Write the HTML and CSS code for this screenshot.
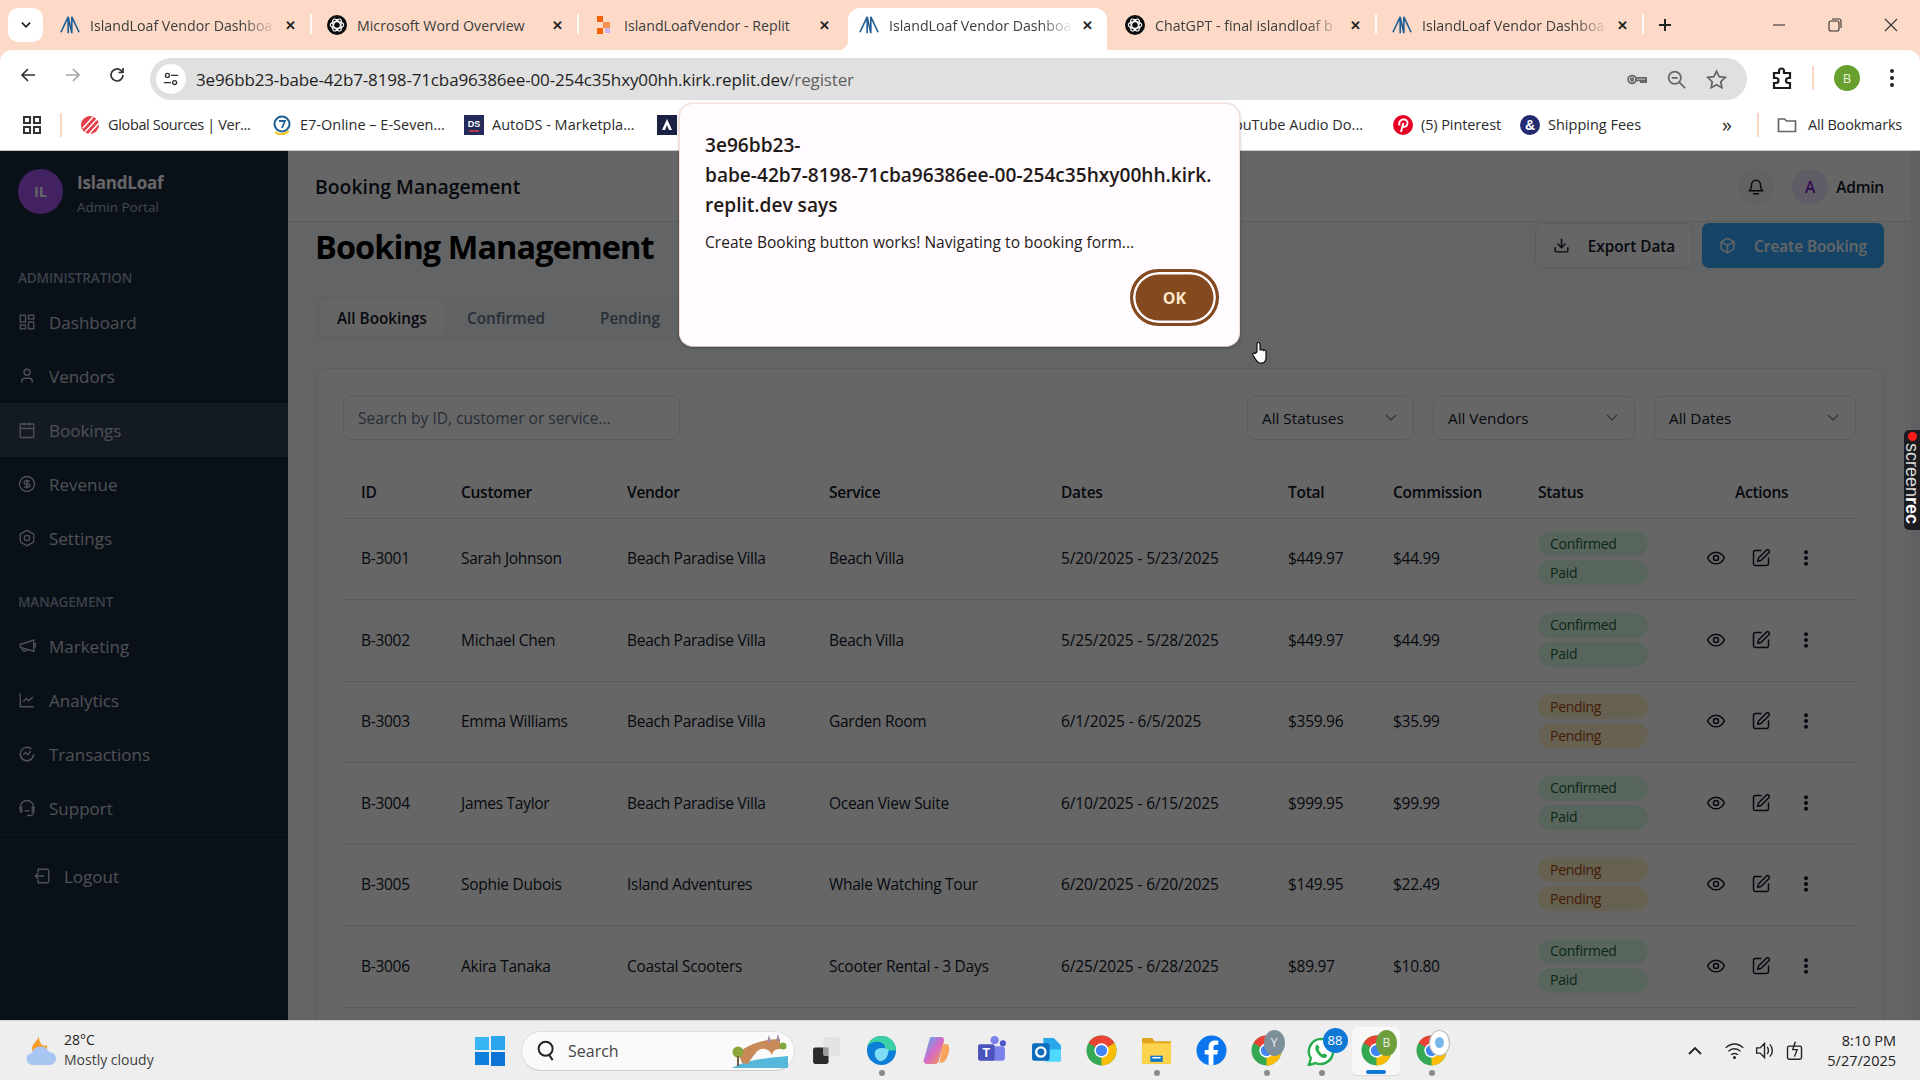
FILE: index.html
```html
<!DOCTYPE html>
<html lang="en">
<head>
<meta charset="utf-8">
<title>Booking Management</title>
<link rel="stylesheet" href="styles.css">
</head>
<body>
<svg class="defs" width="0" height="0" aria-hidden="true">
  <symbol id="i-il" viewBox="0 0 22 24"><path d="M1 20 9 3v18M13 21V3l8 17M9 3l4 18" fill="none" stroke="#1f5f94" stroke-width="1.8"/></symbol>
  <symbol id="i-gpt" viewBox="0 0 24 24"><circle cx="12" cy="12" r="12" fill="#0b0b0b"/><g fill="none" stroke="#fff" stroke-width="1.4"><ellipse cx="12" cy="12" rx="8" ry="4"/><ellipse cx="12" cy="12" rx="8" ry="4" transform="rotate(60 12 12)"/><ellipse cx="12" cy="12" rx="8" ry="4" transform="rotate(120 12 12)"/></g></symbol>
  <symbol id="i-replit" viewBox="0 0 20 20"><path d="M3 1h6v6H3zM3 13h6v6H3z" fill="#f26207"/><path d="M9 7h7v6H9z" fill="#f7924e"/><path d="M11 13h5v5h-5z" fill="#c9b6f2"/></symbol>
  <symbol id="i-chrome" viewBox="0 0 32 32"><circle cx="16" cy="16" r="15.5" fill="#34a853"/><path d="M16 .5a15.5 15.5 0 0 1 13.4 7.8L16 16 2.6 8.3A15.5 15.5 0 0 1 16 .5Z" fill="#ea4335"/><path d="M29.4 8.3A15.5 15.5 0 0 1 16 31.5L16 16Z" fill="#fbbc04"/><circle cx="16" cy="16" r="7.4" fill="#fff"/><circle cx="16" cy="16" r="5.8" fill="#4285f4"/></symbol>
  <symbol id="i-dashboard" viewBox="0 0 24 24"><rect x="3" y="3" width="7" height="9"/><rect x="14" y="3" width="7" height="5"/><rect x="14" y="12" width="7" height="9"/><rect x="3" y="16" width="7" height="5"/></symbol>
  <symbol id="i-user" viewBox="0 0 24 24"><path d="M19 21v-2a4 4 0 0 0-4-4H9a4 4 0 0 0-4 4v2"/><circle cx="12" cy="7" r="4"/></symbol>
  <symbol id="i-calendar" viewBox="0 0 24 24"><rect x="3" y="4" width="18" height="18" rx="1"/><path d="M16 2v4M8 2v4M3 10h18"/></symbol>
  <symbol id="i-dollar" viewBox="0 0 24 24"><circle cx="12" cy="12" r="10"/><path d="M16 8h-6a2 2 0 1 0 0 4h4a2 2 0 1 1 0 4H8M12 18V6"/></symbol>
  <symbol id="i-settings" viewBox="0 0 24 24"><path d="M21 16V8a2 2 0 0 0-1-1.73l-7-4a2 2 0 0 0-2 0l-7 4A2 2 0 0 0 3 8v8a2 2 0 0 0 1 1.73l7 4a2 2 0 0 0 2 0l7-4A2 2 0 0 0 21 16z"/><circle cx="12" cy="12" r="3.5"/></symbol>
  <symbol id="i-mega" viewBox="0 0 24 24"><path d="m3 10 18-6v15L3 14v-4z"/><path d="M11.6 16.8a3 3 0 1 1-5.8-1.6M21 9h2v4h-2" /></symbol>
  <symbol id="i-chart" viewBox="0 0 24 24"><path d="M3 3v18h18M7 14l4-4 3 3 6-5"/></symbol>
  <symbol id="i-trans" viewBox="0 0 24 24"><path d="M21 12a9 9 0 1 1-3-6.7"/><path d="M3 12a9 9 0 0 0 18 0"/><path d="M7 13l3-3 3 3 4-5"/></symbol>
  <symbol id="i-support" viewBox="0 0 24 24"><path d="M3 14v-3a9 9 0 1 1 18 0v3"/><path d="M3 11h2v6H3zM19 11h2v6h-2z"/><path d="M21 17a5 5 0 0 1-5 5h-4"/><path d="M9 15c1.500 1.300 4.500 1.300 6 0"/></symbol>
  <symbol id="i-logout" viewBox="0 0 24 24"><path d="M7 7V3h12a2 2 0 0 1 2 2v14a2 2 0 0 1-2 2H7v-4M15 12H3M7 8l-4 4 4 4"/></symbol>
  <symbol id="i-bell" viewBox="0 0 24 24"><path d="M6 9a6 6 0 0 1 12 0c0 6 3 8 3 8H3s3-2 3-8"/><path d="M9 21h6"/></symbol>
  <symbol id="i-download" viewBox="0 0 24 24"><path d="M21 15v4a2 2 0 0 1-2 2H5a2 2 0 0 1-2-2v-4M7 10l5 5 5-5M12 15V3"/></symbol>
  <symbol id="i-package" viewBox="0 0 24 24"><path d="M21 16V8a2 2 0 0 0-1-1.730l-7-4a2 2 0 0 0-2 0l-7 4A2 2 0 0 0 3 8v8a2 2 0 0 0 1 1.730l7 4a2 2 0 0 0 2 0l7-4A2 2 0 0 0 21 16z"/><path d="m3.300 7 8.700 5 8.700-5M12 22V12"/></symbol>
  <symbol id="i-eye" viewBox="0 0 24 24"><path d="M2 12s3-7 10-7 10 7 10 7-3 7-10 7-10-7-10-7Z"/><circle cx="12" cy="12" r="3"/></symbol>
  <symbol id="i-edit" viewBox="0 0 24 24"><path d="M12 3H5a2 2 0 0 0-2 2v14a2 2 0 0 0 2 2h14a2 2 0 0 0 2-2v-7"/><path d="M18.400 2.600a2.120 2.120 0 1 1 3 3L12 15l-4 1 1-4Z"/></symbol>
  <symbol id="i-dots" viewBox="0 0 24 24"><circle cx="12" cy="5" r="1.500" fill="currentColor"/><circle cx="12" cy="12" r="1.500" fill="currentColor"/><circle cx="12" cy="19" r="1.500" fill="currentColor"/></symbol>
  <symbol id="i-chev" viewBox="0 0 24 24"><path d="m5 8 7 7 7-7"/></symbol>
</svg>

<div class="chrome">
  <div class="tabstrip">
    <button class="tab-search"><svg class="ui-icon s14"><use href="#i-chev"/></svg></button>
    <div class="tab"><svg class="fav"><use href="#i-il"/></svg><span class="tab-title">IslandLoaf Vendor Dashboa</span><span class="tab-x">✕</span></div>
    <div class="tab"><svg class="fav"><use href="#i-gpt"/></svg><span class="tab-title tab-title-plain">Microsoft Word Overview</span><span class="tab-x">✕</span></div>
    <div class="tab tab-next-active"><svg class="fav"><use href="#i-replit"/></svg><span class="tab-title tab-title-plain">IslandLoafVendor - Replit</span><span class="tab-x">✕</span></div>
    <div class="tab tab-active"><svg class="fav"><use href="#i-il"/></svg><span class="tab-title">IslandLoaf Vendor Dashboa</span><span class="tab-x">✕</span></div>
    <div class="tab"><svg class="fav"><use href="#i-gpt"/></svg><span class="tab-title">ChatGPT - final islandloaf b</span><span class="tab-x">✕</span></div>
    <div class="tab"><svg class="fav"><use href="#i-il"/></svg><span class="tab-title">IslandLoaf Vendor Dashboa</span><span class="tab-x">✕</span></div>
    <svg class="new-tab" viewBox="0 0 16 16"><path d="M8 2v12M2 8h12"/></svg>
    <div class="win-controls">
      <svg viewBox="0 0 16 16"><path d="M2 8h12"/></svg>
      <svg viewBox="0 0 16 16"><rect x="2" y="4" width="10" height="10" rx="2"/><path d="M5 2h7a2 2 0 0 1 2 2v7"/></svg>
      <svg viewBox="0 0 16 16"><path d="m2 2 12 12M14 2 2 14"/></svg>
    </div>
  </div>
  <div class="toolbar">
    <svg class="nav-icon" viewBox="0 0 20 20"><path d="M17 10H4M10 4l-6 6 6 6"/></svg>
    <svg class="nav-icon nav-off" viewBox="0 0 20 20"><path d="M3 10h13M10 4l6 6-6 6"/></svg>
    <svg class="nav-icon" viewBox="0 0 20 20"><path d="M16 10a6 6 0 1 1-2-4.500L16 7.500M16 3v4.500h-4.500"/></svg>
    <div class="omnibox">
      <span class="site-info"><svg viewBox="0 0 20 20"><circle cx="6" cy="6" r="2.200"/><circle cx="14" cy="14" r="2.200"/><path d="M10 6h8M2 14h8"/></svg></span>
      <span class="url">3e96bb23-babe-42b7-8198-71cba96386ee-00-254c35hxy00hh.kirk.replit.dev<span class="url-path">/register</span></span>
      <svg class="omni-icon" viewBox="0 0 24 24"><circle cx="7" cy="12" r="4.500"/><circle cx="7" cy="12" r="1.500"/><path d="M11.500 10H23v5h-2v-2h-2v2h-2v-2h-5.500"/></svg>
      <svg class="omni-icon" viewBox="0 0 24 24"><circle cx="10" cy="10" r="7"/><path d="m15 15 7 7M6.500 10h7"/></svg>
      <svg class="omni-icon" viewBox="0 0 24 24"><path d="m12 2.500 3 6.300 6.900.9-5 4.800 1.200 6.900-6.100-3.300-6.100 3.300 1.200-6.900-5-4.800 6.900-.9Z"/></svg>
    </div>
    <svg class="ext-icon" viewBox="0 0 24 24"><path d="M4 7h5V5a2.500 2.500 0 0 1 5 0v2h6v5h-1.500a2.500 2.500 0 0 0 0 5H20v5H4v-5h2a2.500 2.500 0 0 0 0-5H4Z"/></svg>
    <span class="tool-sep"></span>
    <span class="profile">B</span>
    <svg class="kebab" viewBox="0 0 8 24"><circle cx="4" cy="5" r="2"/><circle cx="4" cy="12" r="2"/><circle cx="4" cy="19" r="2"/></svg>
  </div>
  <div class="bookmarks">
    <svg class="apps" viewBox="0 0 20 20"><rect x="2" y="2" width="6" height="6"/><rect x="12" y="2" width="6" height="6"/><rect x="2" y="12" width="6" height="6"/><rect x="12" y="12" width="6" height="6"/></svg>
    <span class="bm-sep"></span>
    <span class="bm bm-global"><svg class="bm-fav" viewBox="0 0 20 20"><circle cx="10" cy="10" r="9" fill="#e5404a"/><path d="M3 13 13 2M5 17 17 4M9 19 19 8" stroke="#fff" stroke-width="1.500"/></svg><span class="bm-tight">Global Sources | Ver...</span></span>
    <span class="bm bm-e7"><svg class="bm-fav" viewBox="0 0 20 20"><circle cx="10" cy="9" r="7.500" fill="none" stroke="#1f5f94" stroke-width="2"/><path d="M7 6h6l-3 7" fill="none" stroke="#1f5f94" stroke-width="1.800"/><path d="M3 17c4 3 9 3 14-1" fill="none" stroke="#f3c51c" stroke-width="2"/></svg>E7-Online – E-Seven...</span>
    <span class="bm bm-auto"><svg class="bm-fav" viewBox="0 0 20 20"><rect width="20" height="20" fill="#232a5c"/><path d="M5 12h10" stroke="#e5404a" stroke-width="1.500" transform="translate(0 4)"/><text x="10" y="12" font-size="9" font-weight="700" fill="#fff" text-anchor="middle" font-family="Liberation Sans">DS</text></svg>AutoDS - Marketpla...</span>
    <span class="bm bm-a"><svg class="bm-fav" viewBox="0 0 20 20"><rect width="20" height="20" fill="#1a2143"/><path d="M10 4 5 15h3l2-5 2 5h3Z" fill="#fff"/></svg></span>
    <span class="bm bm-yt">YouTube Audio Do...</span>
    <span class="bm bm-pin"><svg class="bm-fav" viewBox="0 0 20 20"><circle cx="10" cy="10" r="10" fill="#e60023"/><path d="M8 17 10.300 8M6.500 10.500C5 6 9 4 11.500 4.500c3 .6 3.600 3.400 2.600 5.500-1 2-3.700 2.500-4.700.8" fill="none" stroke="#fff" stroke-width="1.900"/></svg>(5) Pinterest</span>
    <span class="bm bm-ship"><svg class="bm-fav" viewBox="0 0 20 20"><circle cx="10" cy="10" r="10" fill="#232a70"/><text x="10" y="15" font-size="14" font-weight="700" fill="#fff" text-anchor="middle" font-family="Liberation Sans">&amp;</text></svg>Shipping Fees</span>
    <span class="bm-more">»</span>
    <span class="bm-sep bm-sep-r"></span>
    <span class="bm bm-all"><svg class="folder" viewBox="0 0 20 20"><path d="M1.500 4h6l2 2h9v10.500h-17Z"/></svg>All Bookmarks</span>
  </div>
</div>

<div class="page">
  <aside class="sidebar">
    <div class="brand">
      <span class="brand-logo">IL</span>
      <div class="brand-text"><strong>IslandLoaf</strong><span>Admin Portal</span></div>
    </div>
    <div class="nav-label">ADMINISTRATION</div>
    <a class="nav-item"><svg class="nav-svg"><use href="#i-dashboard"/></svg>Dashboard</a>
    <a class="nav-item"><svg class="nav-svg"><use href="#i-user"/></svg>Vendors</a>
    <a class="nav-item nav-active"><svg class="nav-svg"><use href="#i-calendar"/></svg>Bookings</a>
    <a class="nav-item"><svg class="nav-svg"><use href="#i-dollar"/></svg>Revenue</a>
    <a class="nav-item"><svg class="nav-svg"><use href="#i-settings"/></svg>Settings</a>
    <div class="nav-label nav-label-2">MANAGEMENT</div>
    <a class="nav-item"><svg class="nav-svg"><use href="#i-mega"/></svg>Marketing</a>
    <a class="nav-item"><svg class="nav-svg"><use href="#i-chart"/></svg>Analytics</a>
    <a class="nav-item"><svg class="nav-svg"><use href="#i-trans"/></svg>Transactions</a>
    <a class="nav-item"><svg class="nav-svg"><use href="#i-support"/></svg>Support</a>
    <div class="logout"><a class="nav-item"><svg class="nav-svg"><use href="#i-logout"/></svg>Logout</a></div>
  </aside>

  <main class="main">
    <header class="topbar">
      <div class="topbar-title">Booking Management</div>
      <span class="bell"><svg class="ln-icon"><use href="#i-bell"/></svg></span>
      <span class="avatar">A</span>
      <span class="admin">Admin</span>
    </header>
    <div class="content">
      <div class="title-row">
        <h1>Booking Management</h1>
        <button class="btn btn-outline"><svg class="ln-icon"><use href="#i-download"/></svg>Export Data</button>
        <button class="btn btn-primary"><svg class="ln-icon"><use href="#i-package"/></svg>Create Booking</button>
      </div>
      <div class="tablist">
        <span class="tabbtn tabbtn-on">All Bookings</span>
        <span class="tabbtn">Confirmed</span>
        <span class="tabbtn">Pending</span>
      </div>
      <section class="card">
        <div class="filters">
          <div class="search">Search by ID, customer or service...</div>
          <div class="select sel-s">All Statuses<svg class="ln-icon chev"><use href="#i-chev"/></svg></div>
          <div class="select sel-m">All Vendors<svg class="ln-icon chev"><use href="#i-chev"/></svg></div>
          <div class="select sel-m">All Dates<svg class="ln-icon chev"><use href="#i-chev"/></svg></div>
        </div>
        <table class="bookings">
          <colgroup>
            <col class="c-id"><col class="c-cust"><col class="c-vend"><col class="c-serv"><col class="c-date"><col class="c-total"><col class="c-comm"><col class="c-stat"><col class="c-act">
          </colgroup>
          <thead>
            <tr><th>ID</th><th>Customer</th><th>Vendor</th><th>Service</th><th>Dates</th><th>Total</th><th>Commission</th><th>Status</th><th class="th-act">Actions</th></tr>
          </thead>
          <tbody>
            <tr><td>B-3001</td><td>Sarah Johnson</td><td>Beach Paradise Villa</td><td>Beach Villa</td><td>5/20/2025 - 5/23/2025</td><td>$449.97</td><td>$44.99</td>
              <td><span class="badge ok">Confirmed</span><span class="badge ok">Paid</span></td>
              <td><div class="acts"><svg class="ln-icon"><use href="#i-eye"/></svg><svg class="ln-icon"><use href="#i-edit"/></svg><svg class="ln-icon"><use href="#i-dots"/></svg></div></td></tr>
            <tr><td>B-3002</td><td>Michael Chen</td><td>Beach Paradise Villa</td><td>Beach Villa</td><td>5/25/2025 - 5/28/2025</td><td>$449.97</td><td>$44.99</td>
              <td><span class="badge ok">Confirmed</span><span class="badge ok">Paid</span></td>
              <td><div class="acts"><svg class="ln-icon"><use href="#i-eye"/></svg><svg class="ln-icon"><use href="#i-edit"/></svg><svg class="ln-icon"><use href="#i-dots"/></svg></div></td></tr>
            <tr><td>B-3003</td><td>Emma Williams</td><td>Beach Paradise Villa</td><td>Garden Room</td><td>6/1/2025 - 6/5/2025</td><td>$359.96</td><td>$35.99</td>
              <td><span class="badge wait">Pending</span><span class="badge wait">Pending</span></td>
              <td><div class="acts"><svg class="ln-icon"><use href="#i-eye"/></svg><svg class="ln-icon"><use href="#i-edit"/></svg><svg class="ln-icon"><use href="#i-dots"/></svg></div></td></tr>
            <tr><td>B-3004</td><td>James Taylor</td><td>Beach Paradise Villa</td><td>Ocean View Suite</td><td>6/10/2025 - 6/15/2025</td><td>$999.95</td><td>$99.99</td>
              <td><span class="badge ok">Confirmed</span><span class="badge ok">Paid</span></td>
              <td><div class="acts"><svg class="ln-icon"><use href="#i-eye"/></svg><svg class="ln-icon"><use href="#i-edit"/></svg><svg class="ln-icon"><use href="#i-dots"/></svg></div></td></tr>
            <tr><td>B-3005</td><td>Sophie Dubois</td><td>Island Adventures</td><td>Whale Watching Tour</td><td>6/20/2025 - 6/20/2025</td><td>$149.95</td><td>$22.49</td>
              <td><span class="badge wait">Pending</span><span class="badge wait">Pending</span></td>
              <td><div class="acts"><svg class="ln-icon"><use href="#i-eye"/></svg><svg class="ln-icon"><use href="#i-edit"/></svg><svg class="ln-icon"><use href="#i-dots"/></svg></div></td></tr>
            <tr><td>B-3006</td><td>Akira Tanaka</td><td>Coastal Scooters</td><td>Scooter Rental - 3 Days</td><td>6/25/2025 - 6/28/2025</td><td>$89.97</td><td>$10.80</td>
              <td><span class="badge ok">Confirmed</span><span class="badge ok">Paid</span></td>
              <td><div class="acts"><svg class="ln-icon"><use href="#i-eye"/></svg><svg class="ln-icon"><use href="#i-edit"/></svg><svg class="ln-icon"><use href="#i-dots"/></svg></div></td></tr>
          </tbody>
        </table>
      </section>
    </div>
  </main>
  <div class="scrollbar"></div>
  <div class="dim"></div>
  <div class="screenrec"><i></i><span>screen<b>rec</b></span></div>
</div>

<footer class="taskbar">
  <div class="weather">
    <svg class="weather-icon" viewBox="0 0 32 30"><path d="M14 0c-1 5-7 7-7 13 0 3 3 5 7 5 5 0 9-3 8-9-3 2-8 0-8-9Z" fill="#f59f2a"/><path d="M8 29a6 6 0 0 1-1-12 9 9 0 0 1 17-1 6.500 6.500 0 0 1 1 13Z" fill="#a9c6f2"/></svg>
    <div class="weather-text"><span>28°C</span><span class="weather-sub">Mostly cloudy</span></div>
  </div>
  <svg class="win-logo" viewBox="0 0 30 30"><path d="M0 1h14v13H0z" fill="#38b6f4"/><path d="M16 0h14v14H16z" fill="#2aa5ee"/><path d="M0 16h14v13H0z" fill="#0e7fdc"/><path d="M16 16h14v14H16z" fill="#0d74d6"/></svg>
  <div class="tb-search">
    <svg class="tb-search-icon" viewBox="0 0 24 24"><circle cx="11" cy="10" r="8"/><path d="m15 17 4 6"/></svg>
    <span>Search</span>
    <svg class="bridge" viewBox="0 0 56 34"><path d="M0 34c14-8 34-10 56-12v12Z" fill="#56b7dc"/><path d="M6 19c10-9 26-14 42-14v10c-5 0-7 2-8 6-3-7-12-9-17-1-3 3-5 7-7 10l-6-1Z" fill="#c98a5a"/><circle cx="6" cy="18" r="5.500" fill="#8ca63c"/><path d="M5 22h2v10H5z" fill="#7a5a38"/><path d="M37 1l2 7h-4zM46 0l2 7h-4z" fill="#9c8aa8"/><circle cx="51" cy="12" r="3.500" fill="#7ea83c"/></svg>
  </div>
  <div class="apps-row">
    <span class="tb-app"><svg viewBox="0 0 30 30"><rect x="2" y="12" width="15" height="16" rx="2" fill="#2b2b2b"/><rect x="12" y="2" width="16" height="18" rx="2" fill="#e3e3e3"/><rect x="12" y="12" width="5" height="8" fill="#9a9a9a"/></svg></span>
    <span class="tb-app tb-dot"><svg viewBox="0 0 32 32"><circle cx="16" cy="16" r="15" fill="#0d7ed6"/><path d="M31 16c0-8-6-15-15-15C9 1 3 5 1 12c4-5 10-6 15-4 4 2 5 6 2 8" fill="#3ed0a5"/><path d="M9 19c0-6 9-7 14-4 1 5-3 12-8 12-3 0-6-4-6-8Z" fill="#7fdcf5"/></svg></span>
    <span class="tb-app"><svg viewBox="0 0 30 30"><defs><linearGradient id="cop" x1="0" y1="0" x2="1" y2="1"><stop offset="0" stop-color="#3bb8f0"/><stop offset=".5" stop-color="#d66ac9"/><stop offset="1" stop-color="#f8a03a"/></linearGradient></defs><path d="M10 2h9c3 0 4 2 3 5l-5 19c-1 2-2 2-4 2H6c-3 0-4-2-3-5L8 5c.4-2 1-3 2-3Z" fill="url(#cop)"/><path d="M21 9h5c3 5 0 12-2 15-1 2-3 3-6 3Z" fill="#f7a35c"/></svg></span>
    <span class="tb-app"><svg viewBox="0 0 30 30"><circle cx="18" cy="5" r="4" fill="#7b83eb"/><circle cx="26" cy="8" r="3" fill="#5059c9"/><rect x="13" y="11" width="15" height="14" rx="3" fill="#7b83eb"/><rect x="2" y="9" width="16" height="16" rx="2" fill="#4b53bc"/><text x="10" y="21" font-size="12" font-weight="700" fill="#fff" text-anchor="middle" font-family="Liberation Sans">T</text></svg></span>
    <span class="tb-app"><svg viewBox="0 0 30 30"><path d="M12 3h10l7 7v12H12Z" fill="#28a8ea"/><path d="M18 14h11v12H14Z" fill="#50d9ff"/><rect x="1" y="8" width="17" height="17" rx="2" fill="#0f6cbd"/><circle cx="9.500" cy="16.500" r="4.500" fill="none" stroke="#fff" stroke-width="2.200"/></svg></span>
    <span class="tb-app"><svg viewBox="0 0 32 32"><use href="#i-chrome"/></svg></span>
    <span class="tb-app tb-dot"><svg viewBox="0 0 30 30"><path d="M1 3h10l2 3h16v22H1Z" fill="#e3a41f"/><path d="M1 8h28v20H1Z" fill="#fcd34d"/><rect x="9" y="20" width="12" height="6" fill="#0f78c8"/><path d="M11 22h8" stroke="#fff" stroke-width="1.500"/></svg></span>
    <span class="tb-app"><svg viewBox="0 0 32 32"><circle cx="16" cy="16" r="15.500" fill="#0a75ee"/><path d="M18 31.500V20h4l.7-4.500H18v-3c0-1.500.7-2.500 2.700-2.500H23V6c-1-.2-2.300-.3-3.500-.3-4 0-6.500 2.400-6.500 6.500v3.300H9V20h4v11.500Z" fill="#fff"/></svg></span>
    <span class="tb-app tb-dot"><svg viewBox="0 0 32 32"><use href="#i-chrome"/></svg><span class="tb-prof tb-prof-y">Y</span></span>
    <span class="tb-app tb-dot"><svg viewBox="0 0 32 32"><path d="M16 4a13 13 0 0 0-11 20L3 31l7-2a13 13 0 1 0 6-25Z" fill="#fff" stroke="#27ae4c" stroke-width="2.500"/><path d="M11 10c-2 2-2 5 1 9s7 6 9 4l1-2-3-2-2 1c-2-1-3-3-4-5l1-2-2-3Z" fill="#27ae4c"/></svg><span class="tb-count">88</span></span>
    <span class="tb-app tb-on"><svg viewBox="0 0 32 32"><use href="#i-chrome"/></svg><span class="tb-prof tb-prof-b">B</span></span>
    <span class="tb-app tb-dot"><svg viewBox="0 0 32 32"><use href="#i-chrome"/></svg><span class="tb-prof tb-prof-w"></span></span>
  </div>
  <div class="tray">
    <svg class="tray-caret" viewBox="0 0 14 10"><path d="m1 8 6-6 6 6"/></svg>
    <svg class="tray-icon" viewBox="0 0 24 24"><path d="M2 9c6-6 14-6 20 0M5 13c4-4 10-4 14 0M8 17c2-2 6-2 8 0"/><circle cx="12" cy="20" r="1"/></svg>
    <svg class="tray-icon" viewBox="0 0 24 24"><path d="M3 9v6h4l5 5V4L7 9ZM15 8c2 2 2 6 0 8M18 5c4 4 4 10 0 14"/></svg>
    <svg class="tray-icon" viewBox="0 0 24 24"><rect x="4" y="7" width="16" height="15" rx="2"/><path d="m13 2-3 9h5l-3 8"/></svg>
    <div class="clock"><span>8:10 PM</span><span>5/27/2025</span></div>
  </div>
</footer>

<div class="alert" role="alertdialog">
  <div class="alert-title">3e96bb23-<br>babe-42b7-8198-71cba96386ee-00-254c35hxy00hh.kirk.<br>replit.dev says</div>
  <p class="alert-msg">Create Booking button works! Navigating to booking form...</p>
  <div class="alert-foot"><button class="alert-ok">OK</button></div>
</div>
<svg class="cursor" viewBox="0 0 18 24"><path d="M6 11V3a1.500 1.500 0 0 1 3 0v6l1 0a1.500 1.500 0 0 1 2.500.5 1.500 1.500 0 0 1 2.500.8V17c0 3-2 5-4 5H9c-2 0-3-2-4-3l-3-5c-.8-1.500 1-2.500 2-1.500Z" fill="#fff" stroke="#000" stroke-width="1.100"/></svg>
</body>
</html>
```
FILE: styles.css
```css
* { box-sizing: border-box; }
html, body { margin: 0; height: 100%; }
body {
  width: 1920px; height: 1080px; overflow: hidden; position: relative;
  display: flex; flex-direction: column;
  font-family: "Open Sans", "Noto Sans", sans-serif; color: #0f172a; background: #fff;
}
.defs { position: absolute; }
button { font: inherit; border: 0; }

/* browser chrome */
.chrome { flex: 0 0 151px; background: #fddac7; display: flex; flex-direction: column; }
.tabstrip { height: 50px; display: flex; align-items: flex-start; padding: 8px 0 0 8px; }
.tab-search { width: 35px; height: 34px; margin-right: 2px; background: #fff; border-radius: 10px; padding: 0; display: flex; align-items: center; justify-content: center; color: #222; }
.ui-icon { fill: none; stroke: currentColor; stroke-width: 3; }
.s14 { width: 14px; height: 14px; }
.tab { flex: 0 0 267px; min-width: 0; height: 42px; display: flex; align-items: center; padding: 0 14px 8px 15px; position: relative; font-size: 14.200px; color: #3c3c3c; }
.tab::after { content: ""; position: absolute; right: 0; top: 6px; height: 20px; width: 2px; background: #fff; opacity: .85; }
.tab-next-active::after, .tab-active::after { display: none; }
.tab-active { flex-basis: 259px; margin: 0 3px 0 2px; background: #fff; border-radius: 12px 12px 0 0; padding-left: 11px; padding-right: 12px; }
.tab-active::before { content: ""; position: absolute; left: -10px; bottom: 0; width: 10px; height: 10px; background: radial-gradient(circle at 0 0, transparent 10px, #fff 10.500px); }
.fav { width: 20px; height: 22px; flex: none; margin-right: 10px; }
.tab-title { flex: 1; min-width: 0; white-space: nowrap; overflow: hidden; -webkit-mask-image: linear-gradient(90deg, #000 82%, transparent 100%); mask-image: linear-gradient(90deg, #000 82%, transparent 100%); }
.tab-title-plain { -webkit-mask-image: none; mask-image: none; }
.tab-x { flex: none; width: 16px; text-align: center; font-size: 13px; font-weight: 700; margin-left: 6px; color: #222; }
.new-tab { width: 16px; height: 16px; margin: 9px 0 0 13px; fill: none; stroke: #222; stroke-width: 2; flex: none; }
.win-controls { margin-left: auto; display: flex; gap: 40px; padding: 9px 21px 0 0; }
.win-controls svg { width: 16px; height: 16px; fill: none; stroke: #333; stroke-width: 1.100; }

.toolbar { height: 50px; background: #fff; border-radius: 12px 12px 0 0; display: flex; align-items: center; padding: 0 0 0 18px; position: relative; }
.nav-icon { width: 20px; height: 20px; margin-right: 24.500px; fill: none; stroke: #333; stroke-width: 1.700; flex: none; }
.nav-off { stroke: #a8a8a8; }
.omnibox { position: absolute; left: 150px; top: 8px; width: 1597px; height: 42px; background: #e0e0e0; border-radius: 21px; display: flex; align-items: center; padding: 0 20px 0 6px; }
.site-info { width: 30px; height: 30px; border-radius: 50%; background: #fff; display: flex; align-items: center; justify-content: center; flex: none; }
.site-info svg { width: 18px; height: 18px; fill: none; stroke: #333; stroke-width: 1.500; }
.url { flex: 1; font-size: 17px; margin-left: 10px; color: #1f1f1f; white-space: nowrap; letter-spacing: -.14px; }
.url-path { color: #5f5f5f; }
.omni-icon { width: 21px; height: 21px; margin-left: 19px; fill: none; stroke: #666; stroke-width: 2; flex: none; }
.ext-icon { position: absolute; left: 1770px; top: 16px; width: 24px; height: 24px; fill: none; stroke: #1c1c1c; stroke-width: 2.200; }
.tool-sep { position: absolute; left: 1812px; top: 16px; width: 2px; height: 24px; background: #fbd9c6; }
.profile { position: absolute; left: 1834px; top: 15px; width: 26px; height: 26px; border-radius: 50%; background: #68a02f; color: #e6f2d8; font-size: 13px; display: flex; align-items: center; justify-content: center; }
.kebab { position: absolute; left: 1888px; top: 16px; width: 8px; height: 24px; fill: #222; }

.bookmarks { flex: 1; background: #fff; border-bottom: 1px solid #c8c8c8; display: flex; align-items: center; padding: 0 0 1px 22px; font-size: 14.500px; color: #2b2b2b; position: relative; }
.apps { width: 20px; height: 20px; fill: none; stroke: #333; stroke-width: 2; flex: none; }
.bm-sep { width: 2px; height: 24px; background: #fcd6c2; margin-left: 18px; flex: none; }
.bm { display: flex; align-items: center; white-space: nowrap; flex: none; }
.bm-tight { letter-spacing: -.35px; }
.bm-fav { width: 20px; height: 20px; margin-right: 8px; flex: none; }
.bm-global { margin-left: 18px; width: 192px; }
.bm-e7 { width: 192px; }
.bm-auto { width: 193px; }
.bm-a { width: 496px; }
.bm-yt { width: 240px; justify-content: flex-end; padding-right: 30px; }
.bm-pin { width: 127px; letter-spacing: -.1px; }
.bm-ship { width: 202px; }
.bm-more { font-size: 20px; line-height: 20px; width: 35px; flex: none; }
.bm-sep-r { margin-left: 0; }
.bm-all { margin-left: 18px; letter-spacing: -.2px; }
.folder { width: 20px; height: 20px; margin-right: 11px; fill: none; stroke: #666; stroke-width: 1.700; flex: none; }

/* page */
.page { flex: 0 0 869px; display: flex; position: relative; overflow: hidden; background: #f8fafc; }
.sidebar { flex: 0 0 288px; background: #1b283e; color: #c3c9d3; display: flex; flex-direction: column; }
.brand { display: flex; gap: 14px; padding: 18px 18px 0; height: 95px; align-items: flex-start; }
.brand-logo { width: 45px; height: 45px; border-radius: 50%; background: #a855f7; color: #fff; font-size: 14.500px; font-weight: 700; display: flex; align-items: center; justify-content: center; }
.brand-text { display: flex; flex-direction: column; }
.brand-text strong { color: #fff; font-size: 17px; line-height: 24px; margin-top: 2px; letter-spacing: -.2px; }
.brand-text span { color: #aab4c2; font-size: 13.500px; line-height: 20px; margin-top: 2px; }
.nav-label { padding: 0 18px; font-size: 13.500px; font-weight: 600; color: #94a3b8; height: 24px; line-height: 24px; margin-top: 20px; margin-bottom: 5px; letter-spacing: -.1px; }
.nav-label-2 { margin-top: 25px; margin-bottom: 5px; }
.nav-item { height: 54px; display: flex; align-items: center; gap: 13px; padding-left: 18px; font-size: 17px; flex: none; }
.nav-active { background: #334155; }
.nav-svg { width: 18px; height: 18px; fill: none; stroke: currentColor; stroke-width: 1.800; flex: none; }
.logout { border-top: 1px solid #2b3a50; margin-top: -1px; padding: 14px 0 0 15px; }

.main { flex: 1; min-width: 0; display: flex; flex-direction: column; }
.topbar { flex: 0 0 71px; background: #fff; border-bottom: 1px solid #e2e8f0; display: flex; align-items: center; padding: 2px 27px 0; }
.topbar-title { font-size: 19.400px; font-weight: 600; margin-right: auto; line-height: 28px; color: #111827; }
.bell { width: 36px; height: 36px; border-radius: 50%; background: #f6f6f6; display: flex; align-items: center; justify-content: center; margin-right: 18px; }
.ln-icon { width: 18px; height: 18px; fill: none; stroke: currentColor; stroke-width: 2; flex: none; stroke-linecap: round; stroke-linejoin: round; }
.avatar { width: 36px; height: 36px; border-radius: 50%; background: #f3e8ff; color: #7e22ce; font-size: 15.500px; font-weight: 600; display: flex; align-items: center; justify-content: center; margin-right: 8px; }
.admin { font-size: 15.500px; font-weight: 600; letter-spacing: -.2px; }
.content { padding: 0 27px 0 28px; flex: 1; min-height: 0; }
.title-row { display: flex; align-items: flex-start; gap: 9px; height: 74px; padding-top: 1px; }
h1 { margin: 0 auto 0 -1px; font-size: 32.500px; font-weight: 700; line-height: 48px; letter-spacing: -.95px; color: #000; }
.btn { height: 45px; border-radius: 7px; display: flex; align-items: center; justify-content: center; gap: 18px; font-size: 15.300px; font-weight: 600; }
.btn .ln-icon { width: 17px; height: 17px; }
.btn-outline { width: 158px; background: #fff; border: 1px solid #e2e8f0; color: #0f172a; }
.btn-primary { width: 182px; background: #37aaff; color: #fff; }
.tablist { width: 504px; height: 44px; background: #f1f5f9; border-radius: 7px; padding: 4px; display: grid; grid-template-columns: repeat(4, 124px); }
.tabbtn { display: flex; align-items: center; justify-content: center; padding-bottom: 1px; font-size: 15.300px; font-weight: 600; color: #64748b; border-radius: 5px; }
.tabbtn-on { background: #fff; color: #0f172a; }
.card { margin: 28px 0 0; height: 720px; background: #fff; border: 1px solid #e6e9ee; border-radius: 12px; padding: 27px 27px 0 26px; }
.filters { display: flex; gap: 19px; height: 44px; }
.search { flex: 0 0 337px; margin-right: auto; height: 44px; border: 1px solid #e2e8f0; border-radius: 7px; padding: 0 14px; display: flex; align-items: center; font-size: 15.500px; color: #64748b; }
.select { height: 44px; border: 1px solid #e2e8f0; border-radius: 7px; padding: 0 14px; display: flex; align-items: center; justify-content: space-between; font-size: 15.300px; }
.sel-s { flex: 0 0 167px; }
.sel-m { flex: 0 0 202px; }
.chev { color: #8d8d8d; width: 16px; height: 16px; }
.bookings { width: 1513px; table-layout: fixed; border-collapse: collapse; margin-top: 33px; font-size: 15.500px; letter-spacing: -.28px; }
.c-id { width: 100px; } .c-cust { width: 166px; } .c-vend { width: 202px; } .c-serv { width: 232px; }
.c-date { width: 227px; } .c-total { width: 105px; } .c-comm { width: 145px; } .c-stat { width: 178px; } .c-act { width: 158px; }
.bookings th { height: 45px; padding: 0 0 6px 18px; text-align: left; font-weight: 600; border-bottom: 1px solid #e2e8f0; }
.bookings .th-act { padding-left: 37px; }
.bookings td { height: 81.500px; padding: 0 0 1px 18px; border-bottom: 1px solid #e2e8f0; white-space: nowrap; }
.bookings td:nth-child(5) { letter-spacing: -.1px; }
.badge { display: flex; align-items: center; width: 110px; height: 25px; border-radius: 13px; padding: 0 0 1px 12px; font-size: 14px; font-weight: 500; }
.badge + .badge { margin-top: 4px; }
.ok { background: #dcfce7; color: #166534; }
.wait { background: #fef3c7; color: #a9460f; }
.acts { display: flex; margin-left: -10px; gap: 25px; }
.acts .ln-icon { width: 20px; height: 20px; stroke-width: 1.800; }
.scrollbar { flex: 0 0 9px; background: #f1f1f4; }
.dim { position: absolute; inset: 0; background: rgba(0, 0, 0, .6); }
.screenrec { position: absolute; right: 0; top: 279px; width: 16px; height: 100px; background: #1c1c20; border-radius: 5px 0 0 5px; display: flex; flex-direction: column; align-items: center; color: #ddd; font-family: "Liberation Sans", sans-serif; font-size: 18px; overflow: hidden; }
.screenrec i { width: 9px; height: 9px; border-radius: 50%; background: #ff1a1a; margin: 2px 0 2px; flex: none; }
.screenrec span { writing-mode: vertical-rl; line-height: 16px; }
.screenrec b { color: #fff; }

/* taskbar */
.taskbar { flex: 1; background: #eeeeee; border-top: 1px solid #d4d4d4; display: flex; align-items: center; position: relative; font-size: 14px; color: #222; }
.weather { display: flex; align-items: center; width: 475px; padding-left: 25px; gap: 7px; }
.weather-icon { width: 32px; height: 30px; flex: none; }
.weather-text { display: flex; flex-direction: column; line-height: 20px; margin-top: -2px; }
.weather-sub { color: #3f3f3f; }
.win-logo { width: 30px; height: 30px; flex: none; }
.tb-search { margin-left: 16px; width: 274px; height: 40px; border-radius: 20px; background: #fafafa; border: 1px solid #dfdfdf; border-bottom-color: #cfcfcf; display: flex; align-items: center; padding: 0 6px 0 14px; font-size: 16px; color: #444; flex: none; }
.tb-search-icon { width: 21px; height: 21px; fill: none; stroke: #222; stroke-width: 2.200; margin-right: 11px; flex: none; }
.bridge { width: 56px; height: 34px; margin-left: auto; }
.apps-row { display: flex; margin-left: 3.500px; flex: none; }
.tb-app { width: 55px; height: 48px; position: relative; display: flex; align-items: center; justify-content: center; }
.tb-app > svg { width: 31px; height: 31px; }
.tb-dot::after { content: ""; position: absolute; left: 25px; bottom: -1px; width: 6px; height: 6px; border-radius: 50%; background: #8a8a8a; }
.tb-on { background: #f8f8f8; border-radius: 5px; width: 48px; margin: 0 3.500px; box-shadow: 0 1px 1px #d9d9d9; }
.tb-on::after { content: ""; position: absolute; left: 14px; bottom: 1px; width: 20px; height: 4px; border-radius: 2px; background: #0f78d4; }
.tb-prof { position: absolute; top: 3px; right: 6px; width: 21px; height: 26px; border-radius: 50%; font-size: 12px; display: flex; align-items: center; justify-content: center; color: #eee; }
.tb-prof-y { background: #7d8f99; right: 9px; }
.tb-prof-b { background: #6d9f3d; right: 3px; }
.tb-prof-w { background: #fff; border: 1px solid #bbb; right: 9px; }
.tb-prof-w::after { content: ""; width: 9px; height: 11px; border-radius: 50%; background: #7ab6ea; }
.tb-count { position: absolute; top: 1px; right: 1px; width: 25px; height: 25px; border-radius: 50%; background: #0f78d4; color: #fff; font-size: 13px; display: flex; align-items: center; justify-content: center; }
.tray { margin-left: auto; display: flex; align-items: center; padding-right: 24px; }
.tray-caret { width: 14px; height: 10px; fill: none; stroke: #222; stroke-width: 1.800; margin-right: 22px; }
.tray-icon { width: 21px; height: 21px; fill: none; stroke: #222; stroke-width: 1.600; margin-right: 9px; }
.clock { display: flex; flex-direction: column; align-items: flex-end; line-height: 20px; margin-left: 13px; font-size: 14.500px; }

/* alert */
.alert { position: absolute; left: 679px; top: 103px; width: 561px; height: 244px; background: #fffbfe; border: 1px solid #f6dfd5; border-bottom-color: #c9bdb8; border-radius: 14px; padding: 26px 20px 0 25px; box-shadow: 0 1px 3px rgba(0,0,0,.3); color: #1f1a17; }
.alert-title { font-size: 19.100px; font-weight: 600; line-height: 30px; white-space: nowrap; }
.alert-msg { margin: 11px 0 0; font-size: 15.500px; line-height: 22px; letter-spacing: .03px; }
.alert-foot { display: flex; justify-content: flex-end; margin-top: 16px; }
.alert-ok { width: 89px; height: 57px; border-radius: 29px; background: #84491f; border: 3px solid #84491f; box-shadow: inset 0 0 0 2.500px #fffbfe; color: #ffe7c9; font-size: 16px; font-weight: 700; }
.cursor { position: absolute; left: 1251px; top: 341px; width: 18px; height: 24px; }
```
